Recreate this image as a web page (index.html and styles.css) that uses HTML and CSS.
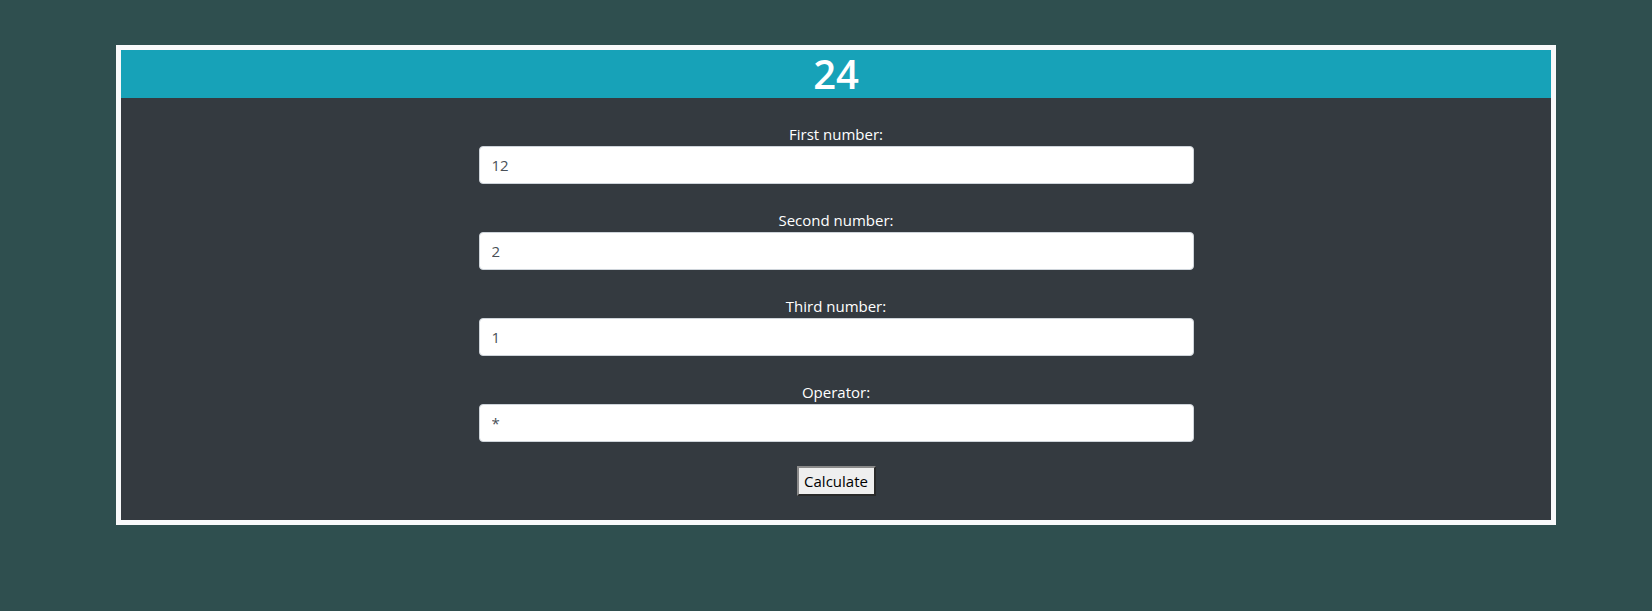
FILE: index.html
```html
<!DOCTYPE html>
<html lang="en">
<head>
<meta charset="utf-8">
<title>Calculator</title>
<link rel="stylesheet" href="styles.css">
</head>
<body>
<main class="card">
  <header class="card-head">
    <h1 class="result">24</h1>
  </header>
  <form class="calc-form">
    <div class="field">
      <label class="field-label" for="n1">First number:</label>
      <input class="field-input" id="n1" type="text" value="12">
    </div>
    <div class="field">
      <label class="field-label" for="n2">Second number:</label>
      <input class="field-input" id="n2" type="text" value="2">
    </div>
    <div class="field">
      <label class="field-label" for="n3">Third number:</label>
      <input class="field-input" id="n3" type="text" value="1">
    </div>
    <div class="field">
      <label class="field-label" for="op">Operator:</label>
      <input class="field-input" id="op" type="text" value="*">
    </div>
    <button class="calc-btn" type="button">Calculate</button>
  </form>
</main>
</body>
</html>
```

FILE: styles.css
```css
html, body {
  margin: 0;
  padding: 0;
}
body {
  background: #2f4f4f;
  font-family: "Open Sans", "Noto Sans", "Liberation Sans", sans-serif;
  font-size: 16px;
  line-height: 1.5;
  padding-top: 45px;
  padding-left: 116px;
}
.card {
  box-sizing: border-box;
  width: 1440px;
  height: 480px;
  border: 5px solid #f8f9fa;
  background: #343a40;
  display: flex;
  flex-direction: column;
}
.card-head {
  background: #17a2b8;
  height: 48px;
  display: flex;
  align-items: center;
  justify-content: center;
}
.result {
  margin: 0;
  color: #fff;
  font-size: 40px;
  font-weight: 600;
  line-height: 48px;
}
.calc-form {
  display: flex;
  flex-direction: column;
  align-items: center;
  gap: 24px;
  padding: 24px 0;
}
.field {
  width: 50%;
  display: flex;
  flex-direction: column;
  align-items: center;
}
.field-label {
  color: #fff;
  height: 24px;
  line-height: 24px;
  font-size: 15px;
}
.field-input {
  box-sizing: border-box;
  width: 100%;
  height: 38px;
  margin: 0;
  padding: 6px 12px;
  font-family: inherit;
  font-size: 15px;
  color: #495057;
  background: #fff;
  border: 1px solid #ced4da;
  border-radius: 4px;
  outline: none;
}
.calc-btn {
  box-sizing: border-box;
  width: 79px;
  height: 30px;
  padding: 0;
  font-family: inherit;
  font-size: 15px;
  color: #000;
  background: #efefef;
  border: 2px solid;
  border-color: #8a8a8a #2a2a2a #2a2a2a #8a8a8a;
}
```
